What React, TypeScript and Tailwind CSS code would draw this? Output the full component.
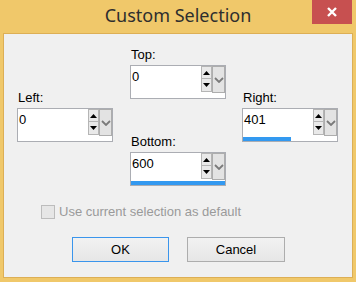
import React from 'react';

// Spin edit: text box with up/down buttons and a drop chevron
const SpinField = ({ label, value, bar }: { label: string; value: string; bar?: string }) => (
  <div className="flex flex-col">
    <div className="h-[20px] leading-[20px] pl-[1px] text-[13px] text-black">{label}</div>
    <div className="relative h-[34px] w-[96px] border border-[#ABADB3] bg-white">
      <div className="flex h-[27px]">
        <div className="flex-1 pl-[1px] pt-[3px] text-[13px] leading-[15px] text-black">{value}</div>
        <div className="flex w-[11px] flex-col">
          <div className="flex h-[13px] items-center justify-center border border-[#B5B5B5] bg-[#E9E9E9]">
            <svg width="7" height="4" viewBox="0 0 7 4"><path d="M0 4 L3.5 0 L7 4 Z" fill="#000" /></svg>
          </div>
          <div className="-mt-[1px] flex h-[14px] items-center justify-center border border-[#B5B5B5] bg-[#E9E9E9]">
            <svg width="7" height="4" viewBox="0 0 7 4"><path d="M0 0 L3.5 4 L7 0 Z" fill="#000" /></svg>
          </div>
        </div>
        <div className="flex w-[13px] items-center justify-center border border-[#ADADAD] bg-[#E3E3E3]">
          <svg width="10" height="6" viewBox="0 0 10 6">
            <path d="M1 1 L5 5 L9 1" fill="none" stroke="#7A7A7A" strokeWidth="1.8" />
          </svg>
        </div>
      </div>
      {bar && <div className={`absolute bottom-0 left-0 h-[4px] bg-[#3399F0] ${bar}`} />}
    </div>
  </div>
);

export default function App() {
  return (
    <div
      className="flex h-[282px] w-[356px] flex-col bg-[#F0C86A]"
      style={{ fontFamily: '"Liberation Sans", Arial, sans-serif' }}
    >
      {/* Title bar */}
      <div className="relative flex h-[33px] shrink-0 items-center justify-center">
        <span
          className="pb-[2px] text-[18px] text-[#2E2E2E]"
          style={{ fontFamily: '"Noto Sans", "Open Sans", sans-serif' }}
        >
          Custom Selection
        </span>
        <div className="absolute right-[4px] top-0 flex h-[24px] w-[40px] items-center justify-center bg-[#C75050]">
          <svg width="10" height="10" viewBox="0 0 10 10">
            <path d="M1 1 L9 9 M9 1 L1 9" stroke="#fff" strokeWidth="2.4" />
          </svg>
        </div>
      </div>

      {/* Client area */}
      <div className="mx-[3px] mb-[4px] flex h-[245px] flex-col border border-[#DDAF55] bg-[#F0F0F0]">
        <div className="flex pl-[13px]">
          <div className="pt-[54px]">
            <SpinField label="Left:" value="0" />
          </div>
          <div className="ml-[17px] flex flex-col pt-[11px]">
            <SpinField label="Top:" value="0" />
            <div className="mt-[33px]">
              <SpinField label="Bottom:" value="600" bar="w-full" />
            </div>
          </div>
          <div className="ml-[16px] pt-[54px]">
            <SpinField label="Right:" value="401" bar="w-[48px]" />
          </div>
        </div>

        <div className="mt-[19px] flex items-center pl-[37px]">
          <div className="h-[14px] w-[14px] border border-[#BCBCBC] bg-[#E6E6E6]" />
          <span className="ml-[4px] text-[13px] leading-[14px] text-[#9A9A9A]">Use current selection as default</span>
        </div>

        <div className="mt-[18px] flex pl-[68px]">
          <button className="h-[25px] w-[97px] border border-[#3A95EC] bg-gradient-to-b from-[#F2F2F2] to-[#E6E6E6] text-[13px] text-black">
            OK
          </button>
          <button className="ml-[18px] h-[25px] w-[98px] border border-[#ADADAD] bg-gradient-to-b from-[#F2F2F2] to-[#E6E6E6] text-[13px] text-black">
            Cancel
          </button>
        </div>
      </div>
    </div>
  );
}
